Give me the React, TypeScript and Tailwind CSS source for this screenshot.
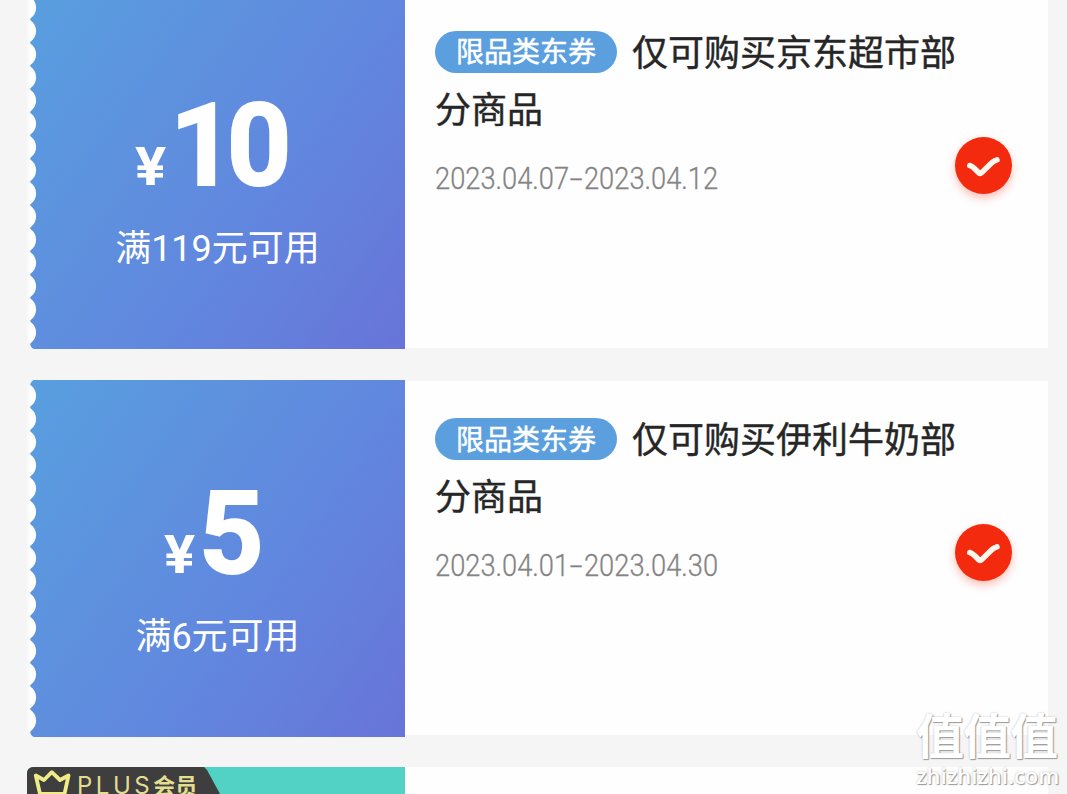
import { Fragment } from 'react';

type Coupon = {
  id: string;
  amount: number;
  threshold: string;
  title: string;
  start: string;
  end: string;
};

const coupons: Coupon[] = [
  {
    id: 'supermarket',
    amount: 10,
    threshold: '满119元可用',
    title: '仅可购买京东超市部分商品',
    start: '2023.04.07',
    end: '2023.04.12',
  },
  {
    id: 'yili',
    amount: 5,
    threshold: '满6元可用',
    title: '仅可购买伊利牛奶部分商品',
    start: '2023.04.01',
    end: '2023.04.30',
  },
];

// Perforated left edge: a column of white half moons
function Perforation() {
  const pitch = 23.2;
  return (
    <svg
      className="absolute -left-1 top-0"
      width="11"
      height="357"
      viewBox="0 0 11 357"
      aria-hidden="true"
    >
      <defs>
        <linearGradient id="edge" x1="0" x2="1">
          <stop offset="0" stopColor="#f5f5f5" />
          <stop offset="0.5" stopColor="#ffffff" />
        </linearGradient>
      </defs>
      <path d="M0 0H7.5Q5.5 1 4.3 4V357H0Z" fill="#f5f5f5" />
      <path d="M4 353Q5.5 356 8 357H4Z" fill="#f5f5f5" />
      {Array.from({ length: 15 }, (_, i) => {
        const y = 4.2 + i * pitch;
        return (
          <path
            key={i}
            d={`M0 ${y + 0.8}H4.4C12 ${y + 6} 12 ${y + 17.2} 4.4 ${y + pitch - 0.8}H0Z`}
            fill="url(#edge)"
          />
        );
      })}
    </svg>
  );
}

function CheckMark() {
  return (
    <div className="w-[57px] h-[57px] rounded-full bg-[#f42a0f] shadow-[0_4px_8px_rgba(244,42,15,0.3)]">
      <svg width="57" height="57" viewBox="0 0 57 57" fill="none" aria-hidden="true">
        <path
          d="M14.8 28.5Q17 29 20 32L24 36Q25.3 37 26.7 35.6L36.5 26Q38.8 23.6 42 22.8"
          stroke="#fff8ee"
          strokeWidth="5.5"
          strokeLinecap="round"
          strokeLinejoin="round"
        />
      </svg>
    </div>
  );
}

function CouponCard({ coupon }: { coupon: Coupon }) {
  return (
    <div className="flex h-[357px] shrink-0 pl-[30px] pr-[19px]">
      <div className="relative w-[375px] shrink-0 bg-[linear-gradient(125deg,#589fdf_0%,#5f8ede_42%,#6187df_60%,#6874d8_100%)] text-white">
        <Perforation />
        <div className="flex flex-col items-center pt-[98px]">
          <div className="flex items-baseline mr-[14px] font-['Roboto'] font-bold leading-[112px] h-[112px]">
            <span className="text-[53px] origin-left scale-x-110">¥</span>
            <span className="text-[115px] tracking-[-8px] ml-[6px] origin-left scale-x-[0.98] [-webkit-text-stroke:2px_#fff]">
              {coupon.amount}
            </span>
          </div>
          <p className="mt-[21px] text-[36px] leading-[52px] font-['Roboto','Noto_Sans_CJK_SC',sans-serif] font-normal">
            {coupon.threshold}
          </p>
        </div>
      </div>

      <div className="flex flex-1 my-[1.5px] bg-[#fefefe]">
        <div className="w-[555px] shrink-0 pl-[30px] pt-[28px]">
          <h2 className="text-[36px] leading-[57px] font-normal text-[#262626] [-webkit-text-stroke:0.4px_#262626]">
            <span className="inline-flex items-center justify-center align-middle w-[182px] h-[42px] mr-[15px] -mt-[8px] pb-[3px] rounded-full bg-[#5b9fdf] text-white text-[28px] leading-none font-normal [-webkit-text-stroke:0.5px_#fff]">
              限品类东券
            </span>
            {coupon.title}
          </h2>
          <p className="mt-[22px] text-[31px] leading-[42px] font-['Roboto'] font-light text-[#848484] [-webkit-text-stroke:0.3px_#848484] origin-left scale-x-[0.88] whitespace-nowrap">
            {coupon.start}
            <span className="inline-block mx-[4px] scale-x-[1.7]">-</span>
            {coupon.end}
          </p>
        </div>
        <div className="pt-[143px] -ml-[5px]">
          <CheckMark />
        </div>
      </div>
    </div>
  );
}

function PlusCard() {
  return (
    <div className="flex h-[357px] shrink-0 pl-[27px] pr-[19px]">
      <div className="relative w-[378px] shrink-0 rounded-tl-[6px] overflow-hidden bg-[#52d2c4]">
        <div className="flex items-start w-[215px] h-[60px] pl-[6px] bg-[#3e3e3e] [clip-path:polygon(0_0,177px_0,180px_3px,211px_60px,0_60px)]">
          <svg className="mt-[2px]" width="38" height="32" viewBox="0 0 38 32" fill="none" aria-hidden="true">
            <path
              d="M2.8 6.5L11 11L18.8 3.2L27 11L35.5 6.5L31.5 25H7Z"
              stroke="#efec88"
              strokeWidth="3.8"
              strokeLinejoin="round"
            />
          </svg>
          <div className="flex items-baseline pl-[6px] text-[#e3dd90] leading-[34px]">
            <span className="text-[24px] tracking-[3.5px] font-['Inter']">PLUS</span>
            <span className="text-[22px] font-bold">会员</span>
          </div>
        </div>
      </div>
      <div className="flex-1 bg-[#fefefe]" />
    </div>
  );
}

function Watermark() {
  return (
    <div className="absolute left-[916px] top-[710px] w-[144px] text-white [text-shadow:1px_1px_1px_#999,0_0_2px_#bbb]">
      <div className="text-[48px] leading-[46px] h-[54px] tracking-[-1px] font-bold whitespace-nowrap">值值值</div>
      <div className="text-[22px] leading-[22px] font-['Open_Sans'] font-semibold whitespace-nowrap">
        zhizhizhi.com
      </div>
    </div>
  );
}

export default function App() {
  return (
    <div
      lang="zh-CN"
      className="relative h-[794px] overflow-hidden bg-[#f5f5f5] font-['Noto_Sans_CJK_SC',sans-serif]"
    >
      <div className="flex flex-col -mt-[8px]">
        {coupons.map((coupon) => (
          <Fragment key={coupon.id}>
            <CouponCard coupon={coupon} />
            <div className="h-[30.5px] shrink-0" />
          </Fragment>
        ))}
        <PlusCard />
      </div>
      <Watermark />
    </div>
  );
}
